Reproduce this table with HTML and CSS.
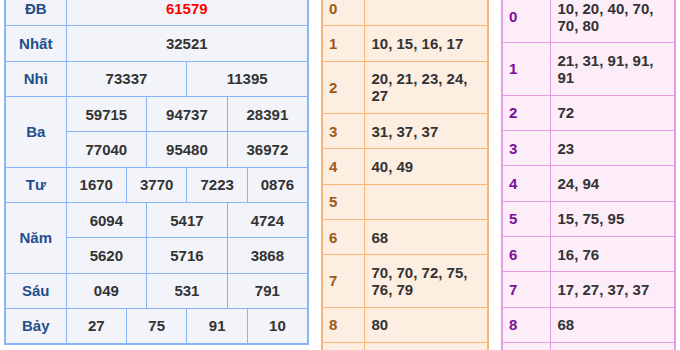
FILE: index.html
```html
<!DOCTYPE html>
<html lang="vi">
<head>
<meta charset="utf-8">
<title>Kết quả xổ số</title>
<link rel="stylesheet" href="styles.css">
</head>
<body>
<div class="wrap">
  <table class="kq">
    <colgroup>
      <col class="c-label">
      <col><col><col><col><col><col><col><col><col><col><col><col>
    </colgroup>
    <tbody>
      <tr><th>ĐB</th><td colspan="12" class="db">61579</td></tr>
      <tr><th>Nhất</th><td colspan="12">32521</td></tr>
      <tr><th>Nhì</th><td colspan="6">73337</td><td colspan="6">11395</td></tr>
      <tr><th rowspan="2">Ba</th><td colspan="4">59715</td><td colspan="4">94737</td><td colspan="4">28391</td></tr>
      <tr><td colspan="4">77040</td><td colspan="4">95480</td><td colspan="4">36972</td></tr>
      <tr><th>Tư</th><td colspan="3">1670</td><td colspan="3">3770</td><td colspan="3">7223</td><td colspan="3">0876</td></tr>
      <tr><th rowspan="2">Năm</th><td colspan="4">6094</td><td colspan="4">5417</td><td colspan="4">4724</td></tr>
      <tr><td colspan="4">5620</td><td colspan="4">5716</td><td colspan="4">3868</td></tr>
      <tr><th>Sáu</th><td colspan="4">049</td><td colspan="4">531</td><td colspan="4">791</td></tr>
      <tr><th>Bảy</th><td colspan="3">27</td><td colspan="3">75</td><td colspan="3">91</td><td colspan="3">10</td></tr>
    </tbody>
  </table>

  <table class="loto loto-dau">
    <colgroup><col class="c-key"><col></colgroup>
    <tbody>
      <tr><th>0</th><td></td></tr>
      <tr><th>1</th><td>10, 15, 16, 17</td></tr>
      <tr><th>2</th><td>20, 21, 23, 24, 27</td></tr>
      <tr><th>3</th><td>31, 37, 37</td></tr>
      <tr><th>4</th><td>40, 49</td></tr>
      <tr><th>5</th><td></td></tr>
      <tr><th>6</th><td>68</td></tr>
      <tr><th>7</th><td>70, 70, 72, 75, 76, 79</td></tr>
      <tr><th>8</th><td>80</td></tr>
      <tr class="more"><th></th><td></td></tr>
    </tbody>
  </table>

  <table class="loto loto-duoi">
    <colgroup><col class="c-key"><col></colgroup>
    <tbody>
      <tr><th>0</th><td>10, 20, 40, 70, 70, 80</td></tr>
      <tr><th>1</th><td>21, 31, 91, 91, 91</td></tr>
      <tr><th>2</th><td>72</td></tr>
      <tr><th>3</th><td>23</td></tr>
      <tr><th>4</th><td>24, 94</td></tr>
      <tr><th>5</th><td>15, 75, 95</td></tr>
      <tr><th>6</th><td>16, 76</td></tr>
      <tr><th>7</th><td>17, 27, 37, 37</td></tr>
      <tr><th>8</th><td>68</td></tr>
      <tr class="more"><th></th><td></td></tr>
    </tbody>
  </table>
</div>
</body>
</html>
```

FILE: styles.css
```css
html, body {
  margin: 0;
  padding: 0;
  background: #ffffff;
  overflow: hidden;
}

body {
  font-family: "Liberation Sans", Arial, Helvetica, sans-serif;
  font-size: 15px;
  font-weight: bold;
  color: #333333;
}

.wrap {
  display: flex;
  align-items: flex-start;
  gap: 12px;
  padding-left: 4px;
  margin-top: -11px;
}

table {
  border-collapse: collapse;
  table-layout: fixed;
}

th, td {
  line-height: 17px;
  padding: 8.67px 7px;
  font-weight: bold;
}

/* Kết quả table */
.kq {
  width: 305px;
  background: #f2f4f9;
  border: 2px solid #8ab4f8;
}
.kq .c-label { width: 61px; }
.kq th, .kq td {
  border: 1px solid #8ab4f8;
  text-align: center;
}
.kq th { color: #1f4e8c; }
.kq td.db { color: #ff0000; }

/* Loto tables */
.loto th, .loto td {
  text-align: left;
  vertical-align: middle;
}
.loto th { padding-left: 6px; }
.loto tr.more th, .loto tr.more td { height: 17px; }

.loto-dau {
  width: 168px;
  background: #fdeee2;
  border: 2px solid #f9b574;
}
.loto-dau .c-key { width: 42px; }
.loto-dau th, .loto-dau td { border: 1px solid #f9b574; }
.loto-dau th { color: #9a5a1b; }

.loto-duoi {
  width: 175px;
  background: #fcedf9;
  border: 2px solid #e59be6;
}
.loto-duoi .c-key { width: 48px; }
.loto-duoi th, .loto-duoi td { border: 1px solid #e59be6; }
.loto-duoi th { color: #7b0f9a; }
```
